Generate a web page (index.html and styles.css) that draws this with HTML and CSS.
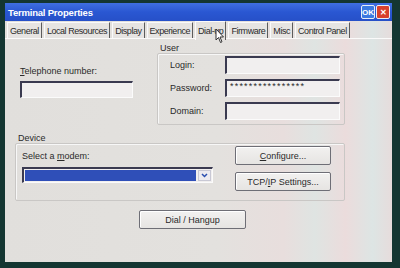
FILE: index.html
```html
<!DOCTYPE html>
<html>
<head>
  <title>Terminal Properties</title>
  <link rel="stylesheet" href="styles.css">
</head>
<body>
  <div class="window">
    <!-- Caption bar -->
    <div class="titlebar">
      <span class="title">Terminal Properties</span>
      <div class="caption-btns">
        <span class="cap-btn ok">OK</span>
        <span class="cap-btn close">&#x2715;</span>
      </div>
    </div>

    <div class="panel">
      <!-- Tab strip -->
      <div class="tabs">
        <span class="tab">General</span>
        <span class="tab">Local Resources</span>
        <span class="tab">Display</span>
        <span class="tab">Experience</span>
        <span class="tab active">Dial-up</span>
        <span class="tab">Firmware</span>
        <span class="tab">Misc</span>
        <span class="tab">Control Panel</span>
      </div>

      <div class="page">
        <div class="top-row">
          <div class="phone">
            <label class="field-label"><u>T</u>elephone number:</label>
            <div class="input phone-input"></div>
          </div>

          <!-- User group -->
          <div class="group user">
            <div class="group-label">User</div>
            <div class="group-box user-box">
              <div class="form-row">
                <span class="row-label">Login:</span>
                <div class="input"></div>
              </div>
              <div class="form-row">
                <span class="row-label">Password:</span>
                <div class="input password">****************</div>
              </div>
              <div class="form-row">
                <span class="row-label">Domain:</span>
                <div class="input"></div>
              </div>
            </div>
          </div>
        </div>

        <!-- Device group -->
        <div class="group device">
          <div class="group-label">Device</div>
          <div class="group-box device-box">
            <div class="modem-col">
              <label class="field-label">Select a <u>m</u>odem:</label>
              <div class="combo">
                <div class="combo-value"></div>
                <div class="combo-arrow">
                  <svg width="7" height="5" viewBox="0 0 7 5"><path d="M1 1 L3.5 3.5 L6 1" fill="none" stroke="#2a4fb0" stroke-width="1.5"/></svg>
                </div>
              </div>
            </div>
            <div class="btn-col">
              <button class="btn configure"><u>C</u>onfigure...</button>
              <button class="btn tcp">TCP/<u>I</u>P Settings...</button>
            </div>
          </div>
        </div>

        <div class="dial-row">
          <button class="btn dial">Dial / Hangup</button>
        </div>
      </div>

      <!-- mouse pointer over the active tab -->
      <svg class="cursor" width="10" height="16" viewBox="0 0 10 16">
        <path d="M1 1 L1 12 L3.5 9.5 L5.5 14.5 L7 13.8 L5 9 L8.5 9 Z" fill="#fff" stroke="#333" stroke-width="1"/>
      </svg>
    </div>
  </div>
</body>
</html>
```

FILE: styles.css
```css
/* Screen frame */
body {
  margin: 0;
  width: 400px;
  height: 268px;
  box-sizing: border-box;
  padding: 3px 8px 6px 5px;
  background-color: #143632;
  font-family: "Liberation Sans", Arial, sans-serif;
  font-size: 9px;
  color: #2a2a2a;
  overflow: hidden;
}
.window {
  height: 100%;
  display: flex;
  flex-direction: column;
}
/* Caption bar */
.titlebar {
  height: 18px;
  flex: none;
  display: flex;
  align-items: center;
  justify-content: space-between;
  padding: 0 2px 0 3px;
  background: linear-gradient(180deg, #3f6fe2 0%, #2a57d2 50%, #2650c8 100%);
}
.title {
  color: #fff;
  font-weight: bold;
  font-size: 9.5px;
  letter-spacing: -0.2px;
}
.caption-btns {
  display: flex;
  gap: 1px;
}
.cap-btn {
  width: 12px;
  height: 12px;
  border: 1px solid #e8eef8;
  border-radius: 2px;
  color: #fff;
  font-weight: bold;
  font-size: 8px;
  display: flex;
  align-items: center;
  justify-content: center;
}
.cap-btn.ok { background-color: #3b7ae0; }
.cap-btn.close { background-color: #d8402c; }
/* Main panel */
.panel {
  flex: 1;
  position: relative;
  background: linear-gradient(90deg, #e1dfdc 0%, #e3e1de 55%, #e8dedd 72%, #dfe4e2 80%, #ebdcdc 88%, #dde5e4 95%, #e6dcdc 100%);
}
.tabs {
  display: flex;
  gap: 2px;
  padding: 1px 0 0 2px;
  height: 17px;
  box-sizing: border-box;
}
.tab {
  display: flex;
  align-items: center;
  white-space: nowrap;
  padding: 0 2px;
  letter-spacing: -0.45px;
  border-top: 1px solid #fafafa;
  border-left: 1px solid #fafafa;
  border-right: 1px solid #5c5c5c;
  background-color: #e6e4e2;
}
.tab.active {
  margin-top: -1px;
  height: 18px;
  background-color: #e4e2df;
}
/* Page under the tabs */
.page {
  border-top: 1px solid #fafafa;
}
.top-row {
  display: flex;
  align-items: flex-start;
  padding-left: 15px;
  margin-top: 5px;
}
.phone {
  width: 113px;
  padding-top: 22px;
}
.field-label {
  display: block;
  line-height: 11px;
  height: 11px;
}
.input {
  height: 17px;
  box-sizing: border-box;
  background-color: #f1efef;
  border-top: 2px solid #3a3a50;
  border-left: 2px solid #3a3a50;
  border-right: 1px solid #fbfbfb;
  border-bottom: 1px solid #fbfbfb;
}
.phone-input {
  margin-top: 4px;
}
/* Group boxes */
.group-label {
  height: 9px;
  line-height: 9px;
  padding-left: 3px;
}
.group-box {
  border: 1px solid #c9c7c5;
  box-shadow: inset 1px 1px 0 #f7f7f7;
  border-radius: 2px;
}
.user {
  margin-left: 24px;
}
.user-box {
  width: 188px;
  box-sizing: border-box;
  padding: 2px 4px 4px 12px;
  display: flex;
  flex-direction: column;
  gap: 5px;
}
.form-row {
  display: flex;
  align-items: center;
  height: 18px;
}
.row-label {
  width: 55px;
}
.form-row .input {
  width: 115px;
  height: 18px;
}
.password {
  font-size: 9px;
  letter-spacing: 1.2px;
  line-height: 10px;
  padding-left: 3px;
}
.device {
  margin: 9px 0 0 10px;
}
.device-box {
  width: 330px;
  box-sizing: border-box;
  padding: 2px 0 9px 6px;
  display: flex;
  align-items: flex-start;
}
.modem-col {
  padding-top: 5px;
}
.combo {
  margin-top: 5px;
  width: 191px;
  height: 16px;
  box-sizing: border-box;
  display: flex;
  background-color: #f1efef;
  border-top: 2px solid #3a3a50;
  border-left: 2px solid #3a3a50;
  border-right: 1px solid #fbfbfb;
  border-bottom: 1px solid #fbfbfb;
}
.combo-value {
  flex: 1;
  margin: 1px 2px 1px 1px;
  background-color: #2f4fb8;
}
.combo-arrow {
  width: 13px;
  margin: 1px 1px 1px 0;
  display: flex;
  align-items: center;
  justify-content: center;
  background-color: #ecebf0;
  border: 1px solid #c8c8d4;
  box-sizing: border-box;
}
.btn-col {
  margin-left: 22px;
  display: flex;
  flex-direction: column;
  gap: 7px;
}
.btn {
  font-family: inherit;
  font-size: 9px;
  color: #2a2a2a;
  background: linear-gradient(180deg, #f2f1f0 0%, #e6e4e2 100%);
  border: 1px solid #6e6e76;
  border-radius: 2px;
  box-shadow: inset 1px 1px 0 #fff;
  padding: 0;
  width: 96px;
  height: 19px;
}
.dial-row {
  padding: 9px 0 0 134px;
}
.btn.dial {
  width: 107px;
}
.cursor {
  position: absolute;
  left: 210px;
  top: 7px;
}
```
